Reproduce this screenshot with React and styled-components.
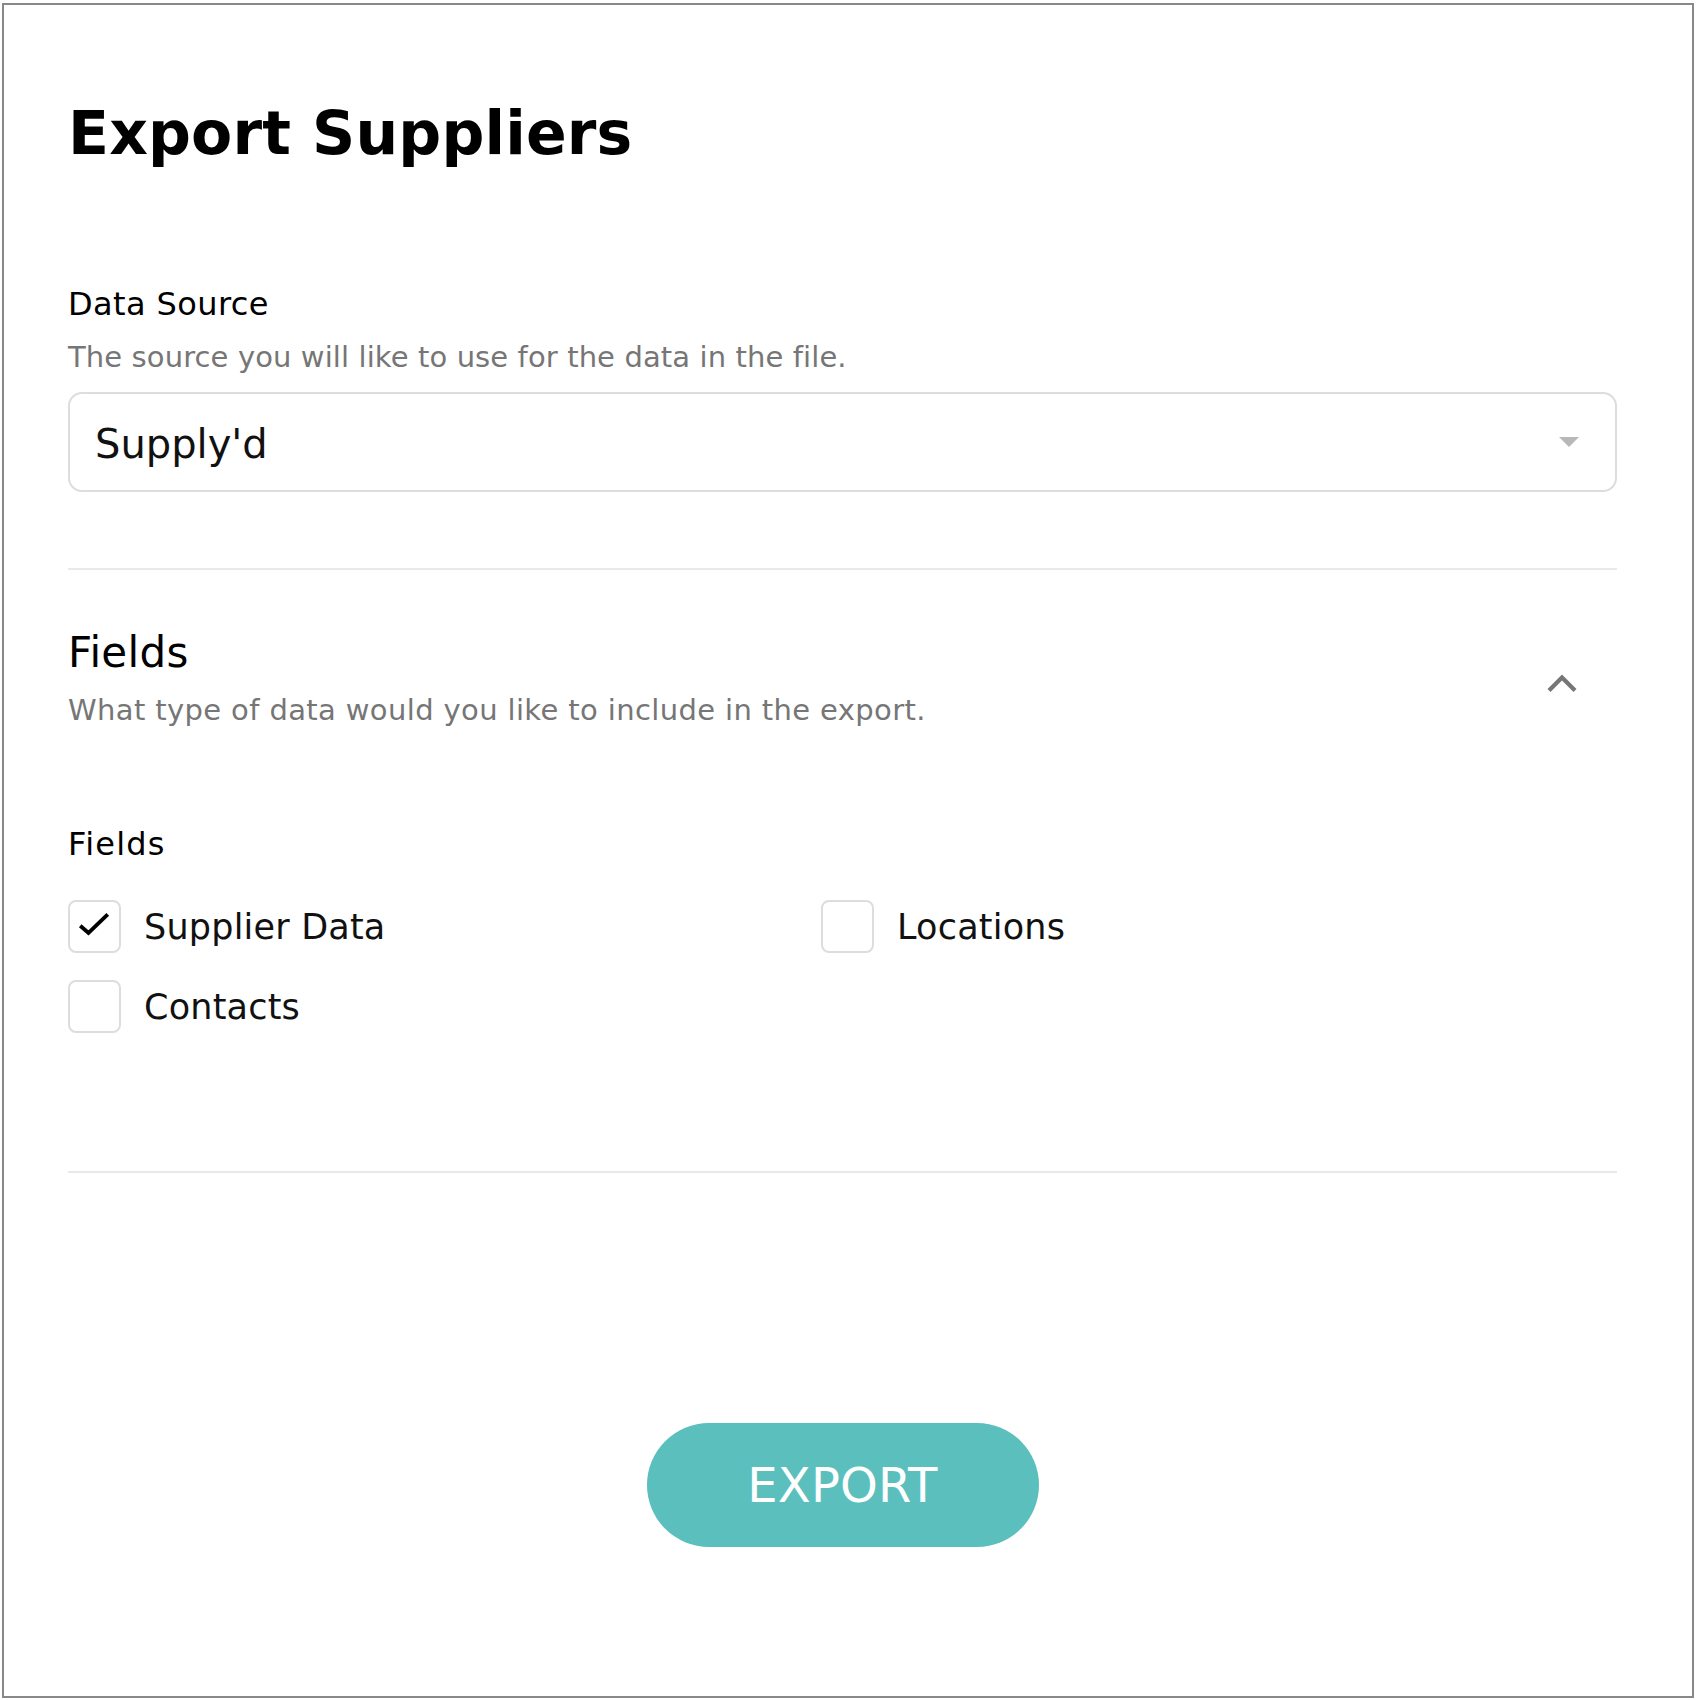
import React, { useState } from "react";
import styled, { createGlobalStyle } from "styled-components";

const Global = createGlobalStyle`
  html, body { margin: 0; padding: 0; background: #ffffff; }
  body { font-family: "DejaVu Sans", "Noto Sans", sans-serif; }
  * { box-sizing: border-box; }
`;

const Frame = styled.div`
  width: 1692px;
  height: 1695px;
  margin: 3px 2px 2px 2px;
  border: 2px solid #888888;
  padding: 92px 75px 0 64px;
  display: flex;
  flex-direction: column;
  background: #ffffff;
`;

const Title = styled.h1`
  margin: 0;
  font-family: "DejaVu Sans", sans-serif;
  font-weight: 700;
  font-size: 60px;
  line-height: 72px;
  letter-spacing: 0.15px;
  color: #000000;
`;

const Label = styled.div`
  margin-top: ${(p) => p.$top}px;
  font-size: 32px;
  line-height: 40px;
  letter-spacing: ${(p) => p.$ls || 0}px;
  color: #000000;
`;

const Hint = styled.div`
  margin-top: 15px;
  font-size: 29px;
  line-height: 36px;
  letter-spacing: ${(p) => p.$ls || 0}px;
  color: #767676;
`;

const Select = styled.div`
  margin-top: 17px;
  height: 100px;
  border: 2px solid #dddddd;
  border-radius: 14px;
  padding: 4px 36px 0 25px;
  display: flex;
  align-items: center;
  justify-content: space-between;
  cursor: pointer;
`;

const SelectValue = styled.span`
  font-size: 40px;
  line-height: 48px;
  color: #111111;
`;

const Caret = styled.span`
  width: 0;
  height: 0;
  border-left: 10px solid transparent;
  border-right: 10px solid transparent;
  border-top: 10px solid #b8b8b8;
  margin-top: -4px;
`;

const Divider = styled.hr`
  margin: ${(p) => p.$top}px 0 0 0;
  border: none;
  height: 2px;
  background: #ece8e5;
`;

const SectionHeader = styled.div`
  margin-top: 58px;
  display: flex;
  align-items: center;
  justify-content: space-between;
`;

const HeaderText = styled.div`
  display: flex;
  flex-direction: column;
`;

const SectionTitle = styled.div`
  font-size: 42px;
  line-height: 49px;
  letter-spacing: 0.3px;
  color: #000000;
`;

const ToggleButton = styled.button`
  border: none;
  background: none;
  padding: 0;
  margin: 11px 40px 0 0;
  display: flex;
  cursor: pointer;
`;

const CheckGrid = styled.div`
  margin-top: 36px;
  display: grid;
  grid-template-columns: 753px 1fr;
  row-gap: 27px;
`;

const CheckRow = styled.label`
  display: flex;
  align-items: center;
  gap: 23px;
  height: 53px;
  cursor: pointer;
`;

const Box = styled.span`
  width: 53px;
  height: 53px;
  flex: none;
  border: 2px solid #dddddd;
  border-radius: 8px;
  display: flex;
  align-items: center;
  justify-content: center;
  background: #ffffff;
`;

const CheckText = styled.span`
  font-size: 35px;
  line-height: 44px;
  letter-spacing: 0.2px;
  color: #111111;
`;

const ButtonRow = styled.div`
  margin-top: 250px;
  display: flex;
  justify-content: center;
`;

const ExportButton = styled.button`
  width: 392px;
  height: 124px;
  border: none;
  border-radius: 62px;
  background: #5bbfbd;
  color: #ffffff;
  font-family: "DejaVu Sans", sans-serif;
  font-size: 48px;
  line-height: 56px;
  letter-spacing: 0.2px;
  padding: 0;
  cursor: pointer;
`;

function Checkbox({ label, checked, onToggle }) {
  return (
    <CheckRow onClick={onToggle}>
      <Box>
        {checked && (
          <svg width="53" height="53" viewBox="0 0 53 53" style={{ marginLeft: -2, marginTop: -2 }}>
            <polyline
              points="12.7,26.7 21.3,34.3 41.3,15"
              fill="none"
              stroke="#000"
              strokeWidth="4"
              strokeLinecap="butt"
              strokeLinejoin="miter"
            />
          </svg>
        )}
      </Box>
      <CheckText>{label}</CheckText>
    </CheckRow>
  );
}

export default function App() {
  const [fields, setFields] = useState({
    supplier: true,
    locations: false,
    contacts: false,
  });
  const toggle = (k) => setFields((f) => ({ ...f, [k]: !f[k] }));

  return (
    <>
      <Global />
      <Frame>
        <Title>Export Suppliers</Title>

        <Label $top={115} $ls={0.4}>Data Source</Label>
        <Hint $ls={0.11}>The source you will like to use for the data in the file.</Hint>
        <Select>
          <SelectValue>Supply'd</SelectValue>
          <Caret />
        </Select>

        <Divider $top={76} />

        <SectionHeader>
          <HeaderText>
            <SectionTitle>Fields</SectionTitle>
            <Hint $ls={0.37}>What type of data would you like to include in the export.</Hint>
          </HeaderText>
          <ToggleButton aria-label="Collapse">
            <svg width="30" height="19" viewBox="0 0 30 19">
              <polyline
                points="2,16.5 15,3.5 28,16.5"
                fill="none"
                stroke="#767676"
                strokeWidth="4.2"
              />
            </svg>
          </ToggleButton>
        </SectionHeader>

        <Label $top={96} $ls={1.2}>Fields</Label>
        <CheckGrid>
          <Checkbox label="Supplier Data" checked={fields.supplier} onToggle={() => toggle("supplier")} />
          <Checkbox label="Locations" checked={fields.locations} onToggle={() => toggle("locations")} />
          <Checkbox label="Contacts" checked={fields.contacts} onToggle={() => toggle("contacts")} />
        </CheckGrid>

        <Divider $top={138} />

        <ButtonRow>
          <ExportButton>EXPORT</ExportButton>
        </ButtonRow>
      </Frame>
    </>
  );
}
